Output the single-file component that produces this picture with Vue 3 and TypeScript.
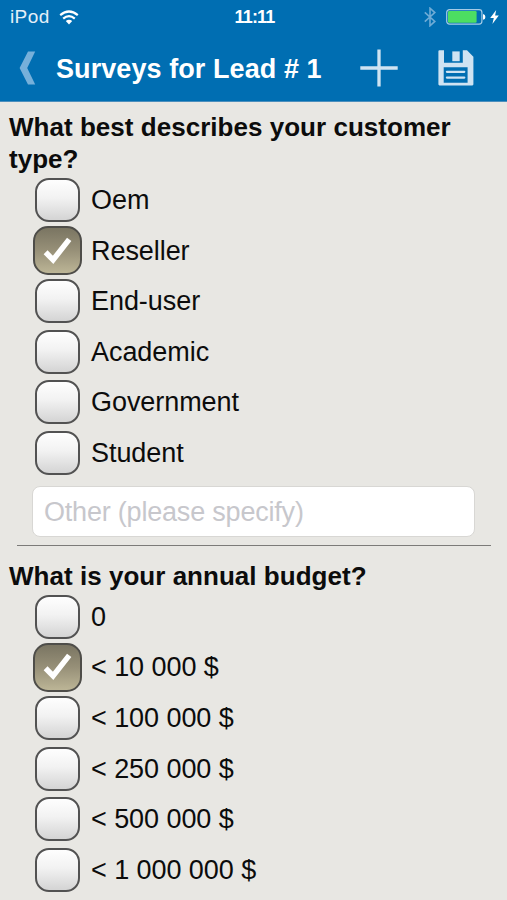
<script setup lang="ts">
import { reactive, ref } from 'vue'

interface Choice {
  label: string
  checked: boolean
}

interface Question {
  title: string
  choices: Choice[]
  other: boolean
}

const questions = reactive<Question[]>([
  {
    title: 'What best describes your customer type?',
    other: true,
    choices: [
      { label: 'Oem', checked: false },
      { label: 'Reseller', checked: true },
      { label: 'End-user', checked: false },
      { label: 'Academic', checked: false },
      { label: 'Government', checked: false },
      { label: 'Student', checked: false },
    ],
  },
  {
    title: 'What is your annual budget?',
    other: false,
    choices: [
      { label: '0', checked: false },
      { label: '< 10 000 $', checked: true },
      { label: '< 100 000 $', checked: false },
      { label: '< 250 000 $', checked: false },
      { label: '< 500 000 $', checked: false },
      { label: '< 1 000 000 $', checked: false },
    ],
  },
])

const otherText = ref('')

function toggle(choice: Choice): void {
  choice.checked = !choice.checked
}
</script>

<template>
  <div class="screen">
    <header class="top">
      <div class="status">
        <div class="carrier">
          <span>iPod</span>
          <svg class="wifi" width="20" height="15" viewBox="0 0 20 15">
            <path d="M1.2 5.2Q10 -2.2 18.8 5.2" fill="none" stroke="#fff" stroke-width="2.2" />
            <path d="M4.2 8.6Q10 3.6 15.8 8.6" fill="none" stroke="#fff" stroke-width="2.2" />
            <path d="M6.8 11Q10 8.4 13.2 11L10 14.4Z" fill="#fff" />
          </svg>
        </div>
        <div class="clock">11:11</div>
        <div class="power">
          <svg class="bluetooth" width="12" height="20" viewBox="0 0 12 20">
            <path d="M0.8 5.3L10.8 14.4L6 18.8V1.2L10.8 5.6L0.8 14.7" fill="none" stroke="#6facd6" stroke-width="1.6" />
          </svg>
          <svg class="battery" width="40" height="16" viewBox="0 0 40 16">
            <rect x="0.7" y="0.7" width="35.2" height="14.4" rx="2.8" fill="none" stroke="#a5cbe6" stroke-width="1.2" />
            <rect x="2" y="2" width="28.6" height="11.8" rx="1.2" fill="#4cde62" />
            <path d="M37 5Q39.4 5.4 39.4 7.9Q39.4 10.4 37 10.8Z" fill="#fff" />
          </svg>
          <svg class="bolt" width="9" height="14" viewBox="0 0 9 14">
            <path d="M6.2 0L0.2 8H3.8L2.4 14L8.8 5.6H5.1Z" fill="#fff" />
          </svg>
        </div>
      </div>
      <nav class="nav">
        <button class="icon back" aria-label="Back">
          <svg width="17" height="34" viewBox="0 0 17 34">
            <path d="M9 0.6H16.2L8.2 17L16.2 33.4H9L0.6 17Z" fill="#76b0da" />
          </svg>
        </button>
        <h1 class="title">Surveys for Lead # 1</h1>
        <button class="icon add" aria-label="Add">
          <svg width="38" height="38" viewBox="0 0 38 38">
            <path d="M19 0.5V37.5M0.3 19H37.7" fill="none" stroke="#cfe3f2" stroke-width="3.3" />
          </svg>
        </button>
        <button class="icon save" aria-label="Save">
          <svg width="36" height="36" viewBox="0 0 36 36">
            <path fill="#cfe3f2" fill-rule="evenodd" d="M0.4 1.3Q0.4 0.2 1.5 0.2H6V12.8H24.8V0.2H29L35.4 6.8V34.3Q35.4 35.4 34.3 35.4H1.5Q0.4 35.4 0.4 34.3ZM5.7 17.3V32.7H29.6V17.3Z" />
            <path fill="#cfe3f2" d="M14.3 1.4H21.7V11.2H14.3Z" />
            <path d="M8.9 21.8H26.3M8.9 27.6H26.3" fill="none" stroke="#cfe3f2" stroke-width="2.2" stroke-linecap="round" />
          </svg>
        </button>
      </nav>
    </header>

    <main class="form">
      <section v-for="question in questions" :key="question.title" class="question">
        <h2 class="heading">{{ question.title }}</h2>
        <ul class="choices">
          <li v-for="choice in question.choices" :key="choice.label" class="choice" @click="toggle(choice)">
            <span class="slot">
              <span class="box" :class="{ checked: choice.checked }">
                <svg v-if="choice.checked" width="30" height="28" viewBox="0 0 30 28">
                  <path d="M2.6 15.3L10.1 22.9L26.2 2.4" fill="none" stroke="#fff" stroke-width="5.5" />
                </svg>
              </span>
            </span>
            <span class="label">{{ choice.label }}</span>
          </li>
        </ul>
        <input v-if="question.other" v-model="otherText" class="other" type="text" placeholder="Other (please specify)" />
        <hr v-if="question.other" class="rule" />
      </section>
    </main>
  </div>
</template>

<style>
body {
  margin: 0;
  background: #e8e7e3;
}
</style>

<style scoped>
.screen {
  width: 507px;
  height: 900px;
  overflow: hidden;
  background: #e8e7e3;
  color: #0c0c0c;
  font-family: "Liberation Sans", Arial, sans-serif;
}

.top {
  box-sizing: border-box;
  height: 102px;
  background: #006eb2;
  border-bottom: 1px solid #4c8fbd;
  color: #fff;
}

.status {
  display: grid;
  grid-template-columns: 1fr auto 1fr;
  align-items: center;
  height: 34px;
  padding: 0 8px 0 10px;
  font-size: 19px;
}

.carrier {
  display: flex;
  align-items: center;
  gap: 9px;
  letter-spacing: 0.4px;
  color: #e4f0f8;
}

.clock {
  padding-top: 1px;
  font-size: 18px;
  font-weight: bold;
  letter-spacing: -0.8px;
}

.power {
  display: flex;
  align-items: center;
  justify-content: flex-end;
}

.battery {
  margin-left: 10px;
}

.bolt {
  margin-left: 4px;
}

.nav {
  display: flex;
  align-items: center;
  height: 67px;
  padding-left: 19px;
}

.icon {
  display: flex;
  padding: 0;
  border: 0;
  background: none;
}

.title {
  width: 304px;
  margin: 3px 0 0 20px;
  font-size: 27px;
  letter-spacing: 0.08px;
  line-height: 32px;
  white-space: nowrap;
}

.save {
  margin-left: 40px;
}

.form {
  padding-top: 9px;
}

.heading {
  margin: 0 40px 0 9px;
  font-size: 26px;
  letter-spacing: 0.03px;
  line-height: 32px;
}

.choices {
  margin: -0.3px 0 0;
  padding: 0 0 0 33px;
  list-style: none;
}

.choice {
  display: flex;
  align-items: center;
  height: 50.6px;
}

.slot {
  display: flex;
  justify-content: center;
  width: 49px;
}

.box {
  box-sizing: border-box;
  display: flex;
  align-items: center;
  justify-content: center;
  width: 45px;
  height: 44px;
  border: 2px solid #525252;
  border-radius: 14px;
  background: linear-gradient(#fefefe, #f2f2f2 45%, #d4d4d4);
}

.box.checked {
  width: 49px;
  height: 49px;
  border-color: #4e4d49;
  border-radius: 15px;
  background: linear-gradient(#7a7562, #979078 50%, #bcb596);
}

.label {
  margin-left: 9px;
  padding-top: 1px;
  font-size: 27px;
  letter-spacing: -0.06px;
  white-space: nowrap;
}

.other {
  box-sizing: border-box;
  display: block;
  width: 443px;
  height: 51px;
  margin: 7.6px 0 0 32px;
  padding: 2px 10px 0 11px;
  border: 1px solid #d8d7d4;
  border-radius: 8px;
  background: #fff;
  color: #0c0c0c;
  font-family: inherit;
  font-size: 27px;
  letter-spacing: -0.2px;
  outline: none;
}

.other::placeholder {
  color: #c7c7cc;
  opacity: 1;
}

.rule {
  height: 1px;
  margin: 8px 16px 14px 17px;
  border: 0;
  background: #7c7b79;
}
</style>
